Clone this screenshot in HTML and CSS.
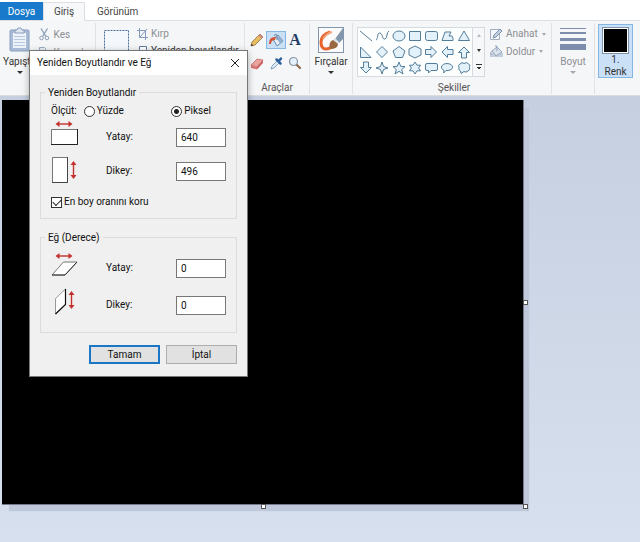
FILE: index.html
```html
<!DOCTYPE html>
<html lang="tr">
<head>
<meta charset="utf-8">
<title>Paint</title>
<link rel="stylesheet" href="styles.css">
</head>
<body>
<nav class="tabs">
  <button class="tab tab-file">Dosya</button>
  <button class="tab tab-active">Giriş</button>
  <button class="tab tab-view">Görünüm</button>
</nav>

<header class="ribbon">
  <section class="group group-clipboard">
    <button class="tool big-tool paste">
      <svg width="22" height="26" viewBox="0 0 22 26"><rect x="1" y="3" width="19" height="21" rx="1" fill="#a9bbd6" stroke="#8a9fc0"/><rect x="4" y="6" width="13" height="15" fill="#eef3fa"/><path d="M6 3h2l1-2h3l1 2h2v3H6z" fill="#dfe6f0" stroke="#8a9fc0"/><path d="M5 9.5h11M5 12.500h11M5 15.500h11M5 18.500h11" stroke="#b9c9e0"/></svg>
      <span>Yapıştır</span><i class="caret"></i>
    </button>
    <div class="stack">
      <button class="tool muted"><svg width="11" height="13" viewBox="0 0 11 13" fill="none" stroke="#8fa0ba"><path d="M2 .5l5 8M8.500.5l-5 8" stroke-width="1.400"/><circle cx="2.500" cy="10" r="1.800"/><circle cx="8" cy="10" r="1.800"/></svg><span>Kes</span></button>
      <button class="tool muted"><svg width="11" height="13" viewBox="0 0 11 13" fill="#e8eef7" stroke="#9aacc8"><path d="M.5 1.500h5l1 1v6h-6zM4.500 4.500h4l2 2v6h-6z"/></svg><span>Kopyala</span></button>
    </div>
  </section>

  <section class="group group-image">
    <button class="tool select-tool"><svg width="26" height="22" viewBox="0 0 26 22"><rect x=".5" y=".5" width="24" height="21" fill="#f4f8fd" stroke="#476c96" stroke-dasharray="2 1"/></svg></button>
    <div class="stack">
      <button class="tool muted"><svg width="11" height="12" viewBox="0 0 11 12" fill="none" stroke="#8599b8"><path d="M2.500 0v9.500H11M0 2.500h8.500V12M3 9l7-8"/></svg><span>Kırp</span></button>
      <button class="tool"><svg width="11" height="12" viewBox="0 0 11 12" fill="#fff" stroke="#5e7b9f"><path d="M2.500 1.500h7v6h-7zM.5 6.500h5v5h-5z"/></svg><span>Yeniden boyutlandır</span></button>
    </div>
  </section>

  <section class="group group-tools">
    <div class="tool-grid">
      <button class="tool"><svg width="16" height="16" viewBox="0 0 16 16"><path d="M2 14l1-4 8-8 3 3-8 8z" fill="#e9bd62" stroke="#8a6d3b" stroke-width=".8"/><path d="M11 2l3 3-1.500 1.500-3-3z" fill="#c9848a"/><path d="M2 14l.6-2.300 1.700 1.700z" fill="#333"/></svg></button>
      <button class="tool chosen"><svg width="18" height="16" viewBox="0 0 18 16"><path d="M6 7l5-4 5 6-6 5z" fill="#e6eef6" stroke="#6989ad"/><path d="M12 4l4 5-3 2.500-4-6z" fill="#91b0d0"/><path d="M10 8V3q-2-2-3 1" fill="none" stroke="#7188a6"/><path d="M9 5Q2 4 2 12l2 0q0-4 4-4z" fill="#d35437"/></svg></button>
      <button class="tool letter">A</button>
      <button class="tool"><svg width="16" height="16" viewBox="0 0 16 16"><path d="M2 10l6-6 6 1-6 7z" fill="#eba39d" stroke="#bd625e" stroke-width=".7"/><path d="M2 10l6 2v2.500L2 13z" fill="#d97a78"/><path d="M8 12l6-7v3l-6 6.500z" fill="#c9605f"/></svg></button>
      <button class="tool"><svg width="16" height="16" viewBox="0 0 16 16"><path d="M3 14l1-3 5-5 2 2-5 5z" fill="#dceaf6" stroke="#6f93b3" stroke-width=".8"/><path d="M8.500 4.500l4 4M10.500 6.500l2.500-3" stroke="#285f9c" stroke-width="2.500" stroke-linecap="round"/></svg></button>
      <button class="tool"><svg width="16" height="16" viewBox="0 0 16 16"><path d="M9.500 9.500L13 13" stroke="#8c6b4d" stroke-width="2.200" stroke-linecap="round"/><circle cx="6.500" cy="6.500" r="4" fill="#e4f0fa" stroke="#8492a3" stroke-width="1.200"/></svg></button>
    </div>
    <span class="group-title">Araçlar</span>
  </section>

  <section class="group group-brush">
    <button class="tool big-tool">
      <svg width="26" height="26" viewBox="0 0 26 26"><rect x=".5" y=".5" width="25" height="25" fill="#fbfbfb" stroke="#8295ad"/><path d="M12 5Q3 8 3 15q0 7 5 7 4 0 6-3" fill="none" stroke="#e8652d" stroke-width="3"/><path d="M5 12q4-6 9-7" fill="none" stroke="#f3a37c" stroke-width="2"/><path d="M25 1L17 12l4 4 4-4z" fill="#8296ad"/><path d="M17 11l4 4-2 3-5-4z" fill="#dbe1e7"/><path d="M12 22q-2-7 3-9l5 4q0 5-8 5z" fill="#99683f"/></svg>
      <span>Fırçalar</span><i class="caret"></i>
    </button>
  </section>

  <section class="group group-shapes">
    <div class="shapes-row">
      <div class="gallery">
        <div class="shape-grid">
          <svg viewBox="0 0 16 16"><path d="M2 3l12 10"/></svg>
          <svg viewBox="0 0 16 16"><path d="M2 12C4 12 3 4 6 5s2 7 5 6 1-7 4-8" fill="none"/></svg>
          <svg viewBox="0 0 16 16"><ellipse cx="8" cy="8" rx="6" ry="5"/></svg>
          <svg viewBox="0 0 16 16"><path d="M2.500 3.500h11v9h-11z"/></svg>
          <svg viewBox="0 0 16 16"><rect x="2.500" y="3.500" width="12" height="9" rx="2"/></svg>
          <svg viewBox="0 0 16 16"><path d="M3 12.500L6 4h6L10 8q4-1 4 2v2.500z"/></svg>
          <svg viewBox="0 0 16 16"><path d="M8 3l5.500 9.500h-11z"/></svg>
          <svg viewBox="0 0 16 16"><path d="M2.500 3v10.500H13z"/></svg>
          <svg viewBox="0 0 16 16"><path d="M8 2.500L13.500 8 8 13.500 2.500 8z"/></svg>
          <svg viewBox="0 0 16 16"><path d="M8 2.500l6 4.500-2.500 6.500h-7L2 7z"/></svg>
          <svg viewBox="0 0 16 16"><path d="M8 2l6 3v6l-6 3-6-3V5z"/></svg>
          <svg viewBox="0 0 16 16"><path d="M2.500 5.500H8V2.500L13.500 8 8 13.500v-3H2.500z"/></svg>
          <svg viewBox="0 0 16 16"><path d="M14 5.500H8.500V2.500L3 8l5.500 5.500v-3H14z"/></svg>
          <svg viewBox="0 0 16 16"><path d="M5.500 14V8.500H2.500L8 3l5.500 5.500h-3V14z"/></svg>
          <svg viewBox="0 0 16 16"><path d="M5.500 2v5.500H2.500L8 13l5.500-5.500h-3V2z"/></svg>
          <svg viewBox="0 0 16 16"><path d="M8 2l1.500 4.500L14 8 9.500 9.500 8 14 6.500 9.500 2 8l4.500-1.500z"/></svg>
          <svg viewBox="0 0 16 16"><path d="M8 2l1.700 4.300 4.300.3-3.300 2.900 1.300 4.500L8 11.300 4 14l1.300-4.500L2 6.600l4.300-.3z"/></svg>
          <svg viewBox="0 0 16 16"><path d="M8 2l2 3.200h3.500L11.600 8l1.900 2.800H10L8 14l-2-3.200H2.500L4.400 8 2.500 5.200H6z"/></svg>
          <svg viewBox="0 0 16 16"><path d="M4 3.500h9q1.500 0 1.500 1.500v4q0 1.500-1.500 1.500H8L5.500 13v-2.500H4q-1.500 0-1.500-1.500V5q0-1.500 1.500-1.500z"/></svg>
          <svg viewBox="0 0 16 16"><path d="M5 10.300C0 8 3 3.500 8 3.500s8 4.500 3 6.500q-2 .8-4 .5L4.500 13z"/></svg>
          <svg viewBox="0 0 16 16"><path d="M4 4q2-2.500 4-.5 3-2 4.500.5 2.500 1 1 3.500 1 2.500-1.500 3.500-2 2-4 .5L5 13.500 4.500 11Q2 10 3 7.500 1.500 5 4 4z"/></svg>
        </div>
        <div class="gallery-scroll"><i class="caret caret-up"></i><i class="caret"></i><i class="caret caret-more"></i></div>
      </div>
      <div class="stack shape-options">
        <button class="tool muted"><svg width="13" height="12" viewBox="0 0 13 12"><path d="M.5 1.500h9v10h-9z" fill="#f4f7fb" stroke="#a2afc2"/><path d="M3 10l1-3 6-6 2 2-6 6z" fill="#c2cfdf" stroke="#8193ad"/></svg><span>Anahat</span><i class="caret caret-faint"></i></button>
        <button class="tool muted"><svg width="13" height="13" viewBox="0 0 13 13"><path d="M0 8h13v4H0z" fill="#c3cddb"/><path d="M2 6l5-4 5 5-6 4z" fill="#dae2ec" stroke="#94a5bd"/><path d="M7 6V1H5M2 6q-2 1-1 4" fill="none" stroke="#94a5bd"/></svg><span>Doldur</span><i class="caret caret-faint"></i></button>
      </div>
    </div>
    <span class="group-title">Şekiller</span>
  </section>

  <section class="group group-size">
    <button class="tool big-tool muted">
      <svg width="26" height="26" viewBox="0 0 26 26" fill="#7d8dab"><path d="M0 1h26v1H0zM0 5h26v2H0zM0 11h26v3H0zM0 17h26v6H0z"/></svg>
      <span>Boyut</span><i class="caret caret-faint"></i>
    </button>
  </section>

  <section class="group group-colors">
    <button class="tool color chosen"><i class="swatch"></i><span>1.<br>Renk</span></button>
    <button class="tool color"><i class="swatch swatch-white"></i><span>2.<br>Renk</span></button>
  </section>
</header>

<main class="workspace">
  <div class="canvas"><i class="handle handle-right"></i><i class="handle handle-bottom"></i><i class="handle handle-corner"></i></div>
</main>

<form class="dialog">
  <header class="dialog-head">
    <h1>Yeniden Boyutlandır ve Eğ</h1>
    <button type="button" class="close"><svg width="10" height="10" viewBox="0 0 10 10"><path d="M1 1l8 8M9 1L1 9" stroke="#222" fill="none"/></svg></button>
  </header>
  <div class="dialog-body">
    <fieldset class="box box-resize">
      <legend>Yeniden Boyutlandır</legend>
      <div class="units">
        <span>Ölçüt:</span>
        <label><input type="radio" name="unit">Yüzde</label>
        <label class="unit-pixel"><input type="radio" name="unit" checked>Piksel</label>
      </div>
      <div class="field">
        <svg width="28" height="28" viewBox="0 0 28 28"><path d="M7 5h12" stroke="#c4302b" stroke-width="1.400"/><path d="M4.500 5l4-3v6zM21.500 5l-4-3v6z" fill="#c4302b"/><path d="M.5 10.500h26v15H.5z" fill="#fff" stroke="#777"/><path d="M0 25.500h26.500V10" fill="none" stroke="#222"/></svg>
        <label for="rw">Yatay:</label><input id="rw" type="text" value="640">
      </div>
      <div class="field field-mid">
        <svg width="28" height="28" viewBox="0 0 28 28"><path d="M1.500 .5h15v25h-15z" fill="#fff" stroke="#777"/><path d="M1 25.500h15.500V0" fill="none" stroke="#444"/><path d="M22.500 8v10" stroke="#c4302b" stroke-width="1.400"/><path d="M22.500 4l-3 4h6zM22.500 22l-3-4h6z" fill="#c4302b"/></svg>
        <label for="rh">Dikey:</label><input id="rh" type="text" value="496">
      </div>
      <label class="keep"><input type="checkbox" checked>En boy oranını koru</label>
    </fieldset>

    <fieldset class="box box-skew">
      <legend>Eğ (Derece)</legend>
      <div class="field">
        <svg width="28" height="28" viewBox="0 0 28 28"><path d="M7 6h12" stroke="#c4302b" stroke-width="1.400"/><path d="M4.500 6l4-3v6zM21.500 6l-4-3v6z" fill="#c4302b"/><path d="M12.500 12h13.500L14 25H1z" fill="#fff" stroke="#777"/><path d="M1 25h13L26 12" fill="none" stroke="#333"/></svg>
        <label for="sw">Yatay:</label><input id="sw" type="text" value="0">
      </div>
      <div class="field">
        <svg width="28" height="28" viewBox="0 0 28 28"><path d="M4.500 11.500L14.500 2v15.500L4.500 27z" fill="#fff" stroke="#999"/><path d="M14.500 2v15.500L4.500 27" fill="none" stroke="#111" stroke-width="1.200"/><path d="M20.500 8v10" stroke="#c4302b" stroke-width="1.400"/><path d="M20.500 4l-3 4h6zM20.500 22l-3-4h6z" fill="#c4302b"/></svg>
        <label for="sh">Dikey:</label><input id="sh" type="text" value="0">
      </div>
    </fieldset>

    <div class="actions">
      <button type="button" class="btn btn-default">Tamam</button>
      <button type="button" class="btn">İptal</button>
    </div>
  </div>
</form>
</body>
</html>
```

FILE: styles.css
```css
* { box-sizing: border-box; }

body {
  margin: 0;
  min-height: 100vh;
  display: flex;
  flex-direction: column;
  overflow: hidden;
  background: #fff;
  color: #222;
  font: 10px/12px Roboto, "Open Sans", sans-serif;
}

button, input { font: inherit; color: inherit; }
i { display: block; flex: none; }
svg { display: block; flex: none; }

.tabs { display: flex; height: 21px; padding-top: 2px; border-bottom: 1px solid #dcdee1; }
.tab { border: 0; padding: 1px 12px 0; background: none; color: #444; }
.tab-file { width: 43px; padding: 1px 0 0; background: #1979ca; color: #fff; }
.tab-active { width: 42px; margin-bottom: -1px; padding: 0; border: 1px solid #dcdee1; border-bottom: 0; background: #f7f8f9; }

.ribbon { display: flex; height: 75px; flex: none; background: #f5f6f7; border-bottom: 1px solid #dadbdc; }
.group { display: flex; flex: none; margin: 2px 0 1px; border-right: 1px solid #e0e2e5; }
.group-title { margin-top: auto; text-align: center; color: #555; line-height: 12px; }
.stack { display: flex; flex-direction: column; gap: 5px; padding-top: 5px; }

.tool { display: flex; align-items: center; gap: 3px; padding: 0; border: 0; background: none; white-space: nowrap; color: #333; }
.big-tool { flex-direction: column; padding-top: 4px; align-self: flex-start; }
.muted { color: #8c8f94; }
.chosen { background: #c9e0f7; border: 1px solid #84b7e4; }
.caret { border: 2px solid transparent; border-top: 3px solid #333; border-bottom: 0; }
.big-tool .caret { border-width: 3px 3px 0; }
.caret-faint { border-top-color: #a5a8ac; }
.stack .caret { margin-left: 1px; }

.group-clipboard { width: 96px; padding-left: 3px; gap: 3px; }
.group-image { width: 149px; padding-left: 8px; gap: 7px; }
.select-tool { align-self: flex-start; padding-top: 7px; }
.group-tools { width: 65px; flex-direction: column; padding-left: 4px; }
.tool-grid { display: grid; grid-template-columns: 16px 20px 16px; gap: 5px 1px; padding-top: 8px; }
.tool-grid .tool { height: 18px; justify-content: center; }
.letter { font: bold 16px/16px "Liberation Serif", serif; color: #1e3c66; }
.group-tools .group-title { margin-right: 4px; }
.group-brush { width: 43px; justify-content: center; }
.group-shapes { flex-direction: column; width: 199px; padding: 4px 0 0 4px; }
.shapes-row { display: flex; gap: 5px; }
.shape-options { padding-top: 1px; }
.gallery { display: flex; width: 128px; border: 1px solid #d5dae0; background: #fdfefe; }
.shape-grid { display: grid; flex: 1; grid-template-columns: repeat(7, 1fr); }
.shape-grid svg { width: 16px; height: 16px; fill: #e3f1fb; stroke: #547d99; }
.gallery-scroll { display: flex; flex-direction: column; align-items: center; justify-content: space-around; width: 12px; border-left: 1px solid #d5dae0; background: #f7f8fa; }
.gallery-scroll .caret-up { border-top: 0; border-bottom: 3px solid #b4b9bf; }
.gallery-scroll .caret-more { width: 6px; height: 6px; border: 0; border-top: 1px solid #333; background: linear-gradient(#333, #333) center 2px / 4px 1px no-repeat, linear-gradient(#333, #333) center 3px / 2px 1px no-repeat; }
.group-size { width: 43px; justify-content: center; }
.group-colors { flex: 1; width: 0; padding-left: 3px; border: 0; overflow: hidden; }
.color { flex: none; flex-direction: column; width: 35px; height: 54px; gap: 0; padding-top: 2px; margin-top: 1px; }
.swatch { width: 27px; height: 27px; border: 1px solid #7d92a9; background: #000; box-shadow: inset 0 0 0 1px #fff; }
.swatch-white { width: 21px; height: 21px; margin: 3px; background: #fff; }

.workspace { flex: 1; padding: 4px 116px 37px 2px; background: linear-gradient(#c5cfe0, #d6e0ee); display: flex; }
.canvas { position: relative; flex: 1; background: #000; border: solid #77788a; border-width: 0 1px 1px 0; box-shadow: 6px 7px 1px -1px #bfc8da; }
.handle { position: absolute; width: 5px; height: 5px; border: 1px solid #555; background: #fff; }
.handle-right { right: -5px; top: calc(50% - 2px); }
.handle-bottom { bottom: -5px; left: calc(50% - 2px); }
.handle-corner { right: -5px; bottom: -5px; }

.dialog { position: absolute; left: 30px; top: 51px; width: 217px; background: #f0f0f0; color: #111; box-shadow: 0 0 0 1px #777, 0 2px 8px rgba(0, 0, 0, .4); }
.dialog-head { display: flex; align-items: center; justify-content: space-between; height: 24px; padding: 0 7px; background: #fff; }
.dialog-head h1 { margin: 0; font-size: 10px; font-weight: 400; }
.close { padding: 0; border: 0; background: none; }
.dialog-body { padding: 10px 10px 12px; }
.box { margin: 0; padding: 4px 10px 8px; border: 1px solid #dcdcdc; min-width: 0; }
.box legend { height: 14px; margin-left: -6px; padding: 0 3px; line-height: 16px; }
.box-skew { margin-top: 11px; padding: 6px 10px 17px; }
.units { display: flex; height: 16px; align-items: center; }
.units label, .keep { display: flex; align-items: center; gap: 2px; }
.units label { margin-left: 7px; }
.units .unit-pixel { margin-left: auto; margin-right: 15px; }
.field { display: grid; grid-template-columns: 55px 70px 50px; align-items: end; }
.field + .field { margin-top: 9px; }
.field + .field-mid { margin-top: 10px; align-items: center; }
.field label { line-height: 20px; }
.field input { width: 100%; height: 19px; padding: 0 4px; border: 1px solid #777; background: #fff; }
.keep { height: 16px; margin-top: 9px; }
input[type="radio"], input[type="checkbox"] { appearance: none; display: grid; place-items: center; flex: none; width: 11px; height: 11px; margin: 0; border: 1px solid #333; background: #fff; }
input[type="radio"] { border-radius: 50%; }
input[type="radio"]:checked { background: radial-gradient(circle, #222 0 2px, #fff 3px); }
input[type="checkbox"]:checked::before { content: ""; width: 7px; height: 4px; margin-bottom: 2px; border: solid #222; border-width: 0 0 1px 1px; rotate: -45deg; }
.actions { display: flex; justify-content: flex-end; gap: 6px; margin-top: 12px; }
.btn { width: 71px; height: 19px; padding: 0; border: 1px solid #adadad; background: #e1e1e1; }
.btn-default { border: 2px solid #1b77c5; }
```
